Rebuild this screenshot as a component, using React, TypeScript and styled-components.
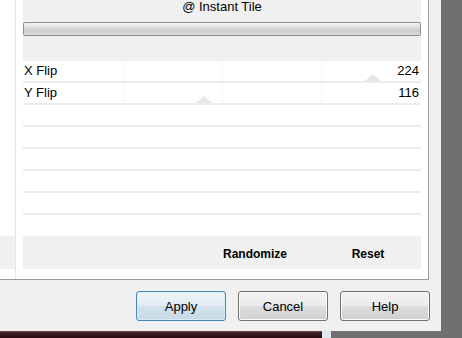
import React from 'react'
import styled, { createGlobalStyle } from 'styled-components'

const GlobalStyle = createGlobalStyle`
  html, body {
    margin: 0;
    padding: 0;
    background: #707070;
    overflow: hidden;
  }
  body {
    font-family: 'Liberation Sans', Arial, sans-serif;
    color: #000;
  }
`

const Screen = styled.div`
  width: 462px;
  height: 338px;
  display: flex;
  flex-direction: column;
  background: #707070;
  overflow: hidden;
`

const Desktop = styled.div`
  display: flex;
  height: 331px;
`

const Window = styled.div`
  width: 441px;
  height: 331px;
  background: #f0f0f0;
  display: flex;
  flex-direction: column;
`

const TabPage = styled.div`
  width: 429px;
  height: 280px;
  box-sizing: border-box;
  background: #fff;
  border-right: 1px solid #9c9c9c;
  border-bottom: 1px solid #9c9c9c;
  display: flex;
`

const SidePanel = styled.div`
  width: 16px;
  box-sizing: border-box;
  border-right: 1px solid #e6e6e6;
  display: flex;
  flex-direction: column;
`

const SideFill = styled.div`
  height: 236px;
`

const SideBar = styled.div`
  height: 33px;
  background: #f0f0f0;
`

const MainPanel = styled.div`
  width: 398px;
  margin-left: 7px;
  display: flex;
  flex-direction: column;
`

const Header = styled.div`
  height: 61px;
  background: #f0f0f0;
  display: flex;
  flex-direction: column;
`

const Title = styled.div`
  height: 22px;
  font-size: 13px;
  line-height: 13px;
  text-align: center;
`

const Track = styled.div`
  height: 14px;
  box-sizing: border-box;
  border: 1px solid #8f8f8f;
  border-radius: 2px;
  background: linear-gradient(#f2f2f2 0%, #e0e0e0 35%, #cdcdcd 60%, #dedede 100%);
`

const Rows = styled.div`
  display: flex;
  flex-direction: column;
  background: #fff;
`

const Row = styled.div<{ last?: boolean; ticks?: boolean }>`
  position: relative;
  height: ${({ last }) => (last ? '21px' : '22px')};
  box-sizing: border-box;
  border-bottom: ${({ last }) => (last ? 'none' : '2px solid #ececec')};
  display: flex;
  justify-content: space-between;
  padding: 0 2px 0 1px;
  font-size: 13px;
  line-height: 20px;
  background-image: ${({ ticks }) =>
    ticks
      ? 'linear-gradient(#f7f7f7, #f7f7f7), linear-gradient(#f7f7f7, #f7f7f7), linear-gradient(#f7f7f7, #f7f7f7)'
      : 'none'};
  background-size: 1px 100%;
  background-position: 25.5% 0, 50% 0, 75% 0;
  background-repeat: no-repeat;
`

const Label = styled.span`
  position: relative;
  z-index: 1;
`

const Thumb = styled.div`
  position: absolute;
  bottom: 0;
  width: 0;
  height: 0;
  margin-left: -8px;
  border-left: 8px solid transparent;
  border-right: 8px solid transparent;
  border-bottom: 7px solid #e6e6e6;
`

const ActionBar = styled.div`
  height: 33px;
  box-sizing: border-box;
  background: #f0f0f0;
  display: flex;
  justify-content: flex-end;
  gap: 13px;
  padding: 3px 3px 0 0;
`

const Action = styled.div`
  width: 100px;
  text-align: center;
  font-size: 12px;
  font-weight: bold;
  line-height: 31px;
`

const ButtonRow = styled.div`
  display: flex;
  justify-content: flex-end;
  gap: 12px;
  padding: 11px 11px 0 0;
`

const Button = styled.button<{ primary?: boolean }>`
  width: 90px;
  height: 30px;
  box-sizing: border-box;
  margin: 0;
  padding: 0;
  font-family: 'Liberation Sans', Arial, sans-serif;
  font-size: 13px;
  color: #000;
  border-radius: 3px;
  border: 1px solid ${({ primary }) => (primary ? '#4a86b0' : '#707070')};
  box-shadow: inset 0 0 0 1px ${({ primary }) => (primary ? '#d6ecf7' : '#fbfbfb')};
  background: ${({ primary }) =>
    primary
      ? 'linear-gradient(#eef4f7 0%, #e2ecf2 48%, #d2e2ec 52%, #c8dbe6 100%)'
      : 'linear-gradient(#f3f3f3 0%, #ebebeb 48%, #dddddd 52%, #d0d0d0 100%)'};
`

const Strip = styled.div`
  display: flex;
  height: 7px;
`

const Wallpaper = styled.div`
  width: 322px;
  background: linear-gradient(#6b4a50 0%, #3a1a20 30%, #2a0d12 100%);
`

const Taskbar = styled.div`
  width: 9px;
  background: #dfe8f1;
`

type Param = { label: string; value: number }

const params: Param[] = [
  { label: 'X Flip', value: 224 },
  { label: 'Y Flip', value: 116 },
]

const emptyRows = 6

const App: React.FC = () => {
  return (
    <>
      <GlobalStyle />
      <Screen>
        <Desktop>
          <Window>
            <TabPage>
              <SidePanel>
                <SideFill />
                <SideBar />
              </SidePanel>
              <MainPanel>
                <Header>
                  <Title>@ Instant Tile</Title>
                  <Track />
                </Header>
                <Rows>
                  {params.map((p) => (
                    <Row key={p.label} ticks>
                      <Thumb style={{ left: `${(p.value / 255) * 100}%` }} />
                      <Label>{p.label}</Label>
                      <Label>{p.value}</Label>
                    </Row>
                  ))}
                  {Array.from({ length: emptyRows }).map((_, i) => (
                    <Row key={i} last={i === emptyRows - 1} />
                  ))}
                </Rows>
                <ActionBar>
                  <Action>Randomize</Action>
                  <Action>Reset</Action>
                </ActionBar>
              </MainPanel>
            </TabPage>
            <ButtonRow>
              <Button primary>Apply</Button>
              <Button>Cancel</Button>
              <Button>Help</Button>
            </ButtonRow>
          </Window>
        </Desktop>
        <Strip>
          <Wallpaper />
          <Taskbar />
        </Strip>
      </Screen>
    </>
  )
}

export default App
